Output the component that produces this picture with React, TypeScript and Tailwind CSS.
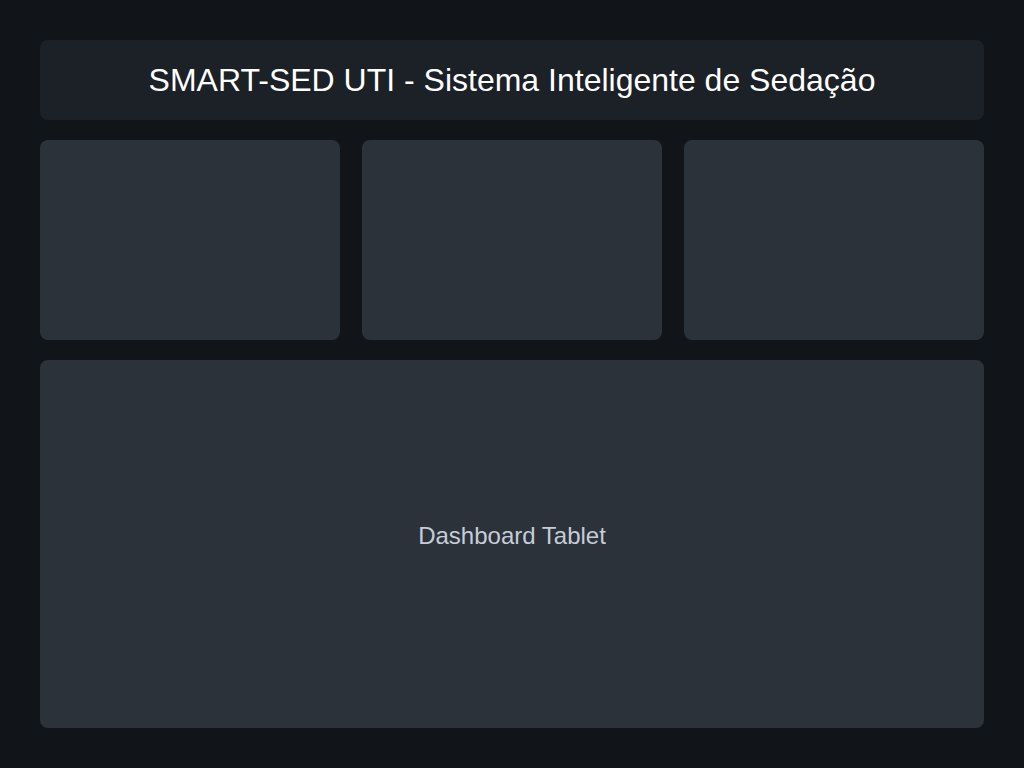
import React from 'react';

const App: React.FC = () => {
  return (
    <div
      className="h-screen w-full bg-[#111519] p-10 flex flex-col gap-5"
      style={{ fontFamily: '"Liberation Sans", Arial, sans-serif' }}
    >
      <header className="h-20 shrink-0 rounded-lg bg-[#1c2027] flex items-center justify-center">
        <h1 className="text-[32px] text-white font-normal">SMART-SED UTI - Sistema Inteligente de Sedação</h1>
      </header>

      <div className="grid grid-cols-3 gap-x-[22px] h-[200px] shrink-0">
        <div className="rounded-lg bg-[#2c323a]"></div>
        <div className="rounded-lg bg-[#2c323a]"></div>
        <div className="rounded-lg bg-[#2c323a]"></div>
      </div>

      <div className="flex-1 rounded-lg bg-[#2c323a] flex items-center justify-center">
        <span className="text-2xl text-[#c6ccd8] -mt-4">Dashboard Tablet</span>
      </div>
    </div>
  );
};

export default App;
